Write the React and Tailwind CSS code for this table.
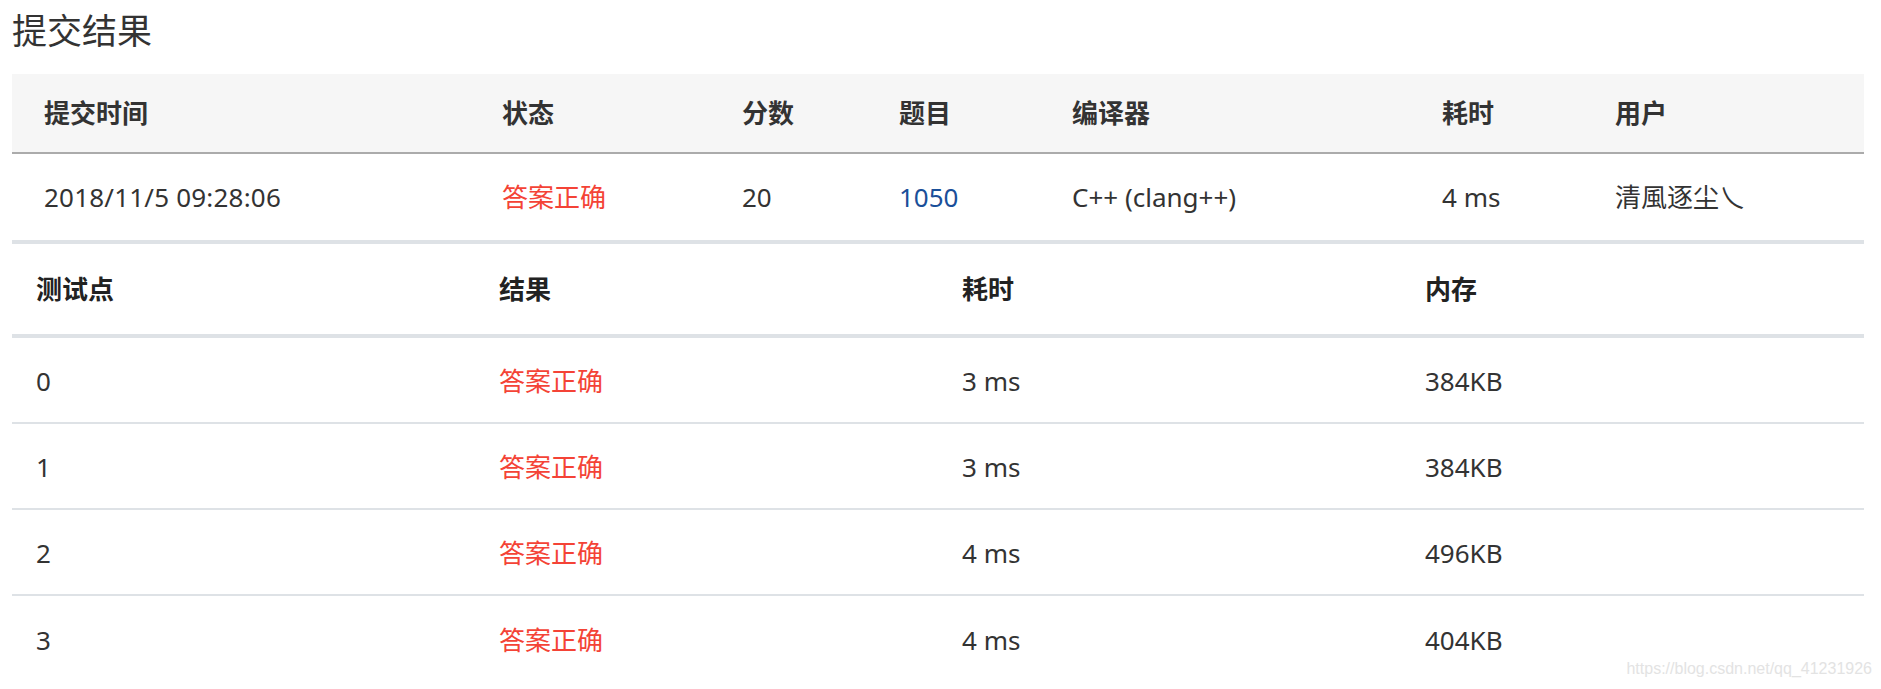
export default function App() {
  const font = { fontFamily: '"Noto Sans", "Noto Sans CJK SC", sans-serif' };
  const rows = [
    ["0", "3 ms", "384KB"],
    ["1", "3 ms", "384KB"],
    ["2", "4 ms", "496KB"],
    ["3", "4 ms", "404KB"],
  ];
  return (
    <div className="relative min-h-[689px] w-[1881px] bg-white text-[#333]" style={font}>
      <div className="ml-[12px] w-[1852px]">
        <div className="flex h-[60px] items-center text-[35px] leading-none font-normal text-[#333]">
          提交结果
        </div>

        {/* submission table */}
        <div className="mt-[14px]">
          <div className="grid h-[80px] grid-cols-[458px_240px_157px_173px_370px_173px_1fr] items-center border-b-2 border-[#ababab] bg-[#f6f6f6] text-[26px] font-bold text-[#333]">
            <div className="pl-[32px]">提交时间</div>
            <div className="pl-[32px]">状态</div>
            <div className="pl-[32px]">分数</div>
            <div className="pl-[32px]">题目</div>
            <div className="pl-[32px]">编译器</div>
            <div className="pl-[32px]">耗时</div>
            <div className="pl-[32px]">用户</div>
          </div>
          <div className="grid h-[86px] grid-cols-[458px_240px_157px_173px_370px_173px_1fr] items-center text-[26px] text-[#333]">
            <div className="pl-[32px] tracking-[0.2px]">2018/11/5 09:28:06</div>
            <div className="pl-[32px] text-[#f44336]">答案正确</div>
            <div className="pl-[32px]">20</div>
            <div className="pl-[32px] text-[#1a4f99]">1050</div>
            <div className="pl-[32px]">C++ (clang++)</div>
            <div className="pl-[32px]">4 ms</div>
            <div className="pl-[32px]">清風逐尘乀</div>
          </div>
        </div>

        {/* test case table */}
        <div className="border-t-4 border-[#dee2e6]">
          <div className="grid h-[94px] grid-cols-4 items-center border-b-4 border-[#dee2e6] text-[26px] font-bold text-[#222]">
            <div className="pl-[24px]">测试点</div>
            <div className="pl-[24px]">结果</div>
            <div className="pl-[24px]">耗时</div>
            <div className="pl-[24px]">内存</div>
          </div>
          {rows.map((r, i) => (
            <div
              key={i}
              className={
                i < rows.length - 1
                  ? "grid h-[86px] grid-cols-4 items-center border-b-2 border-[#dee2e6] pt-[3px] text-[26px] text-[#333]"
                  : "grid h-[86px] grid-cols-4 items-center pt-[3px] text-[26px] text-[#333]"
              }
            >
              <div className="pl-[24px]">{r[0]}</div>
              <div className="pl-[24px] text-[#f44336]">答案正确</div>
              <div className="pl-[24px]">{r[1]}</div>
              <div className="pl-[24px]">{r[2]}</div>
            </div>
          ))}
        </div>
      </div>

      <div
        className="absolute right-[9px] top-[661px] text-[16px] leading-[16px] text-[#e3e3e3]"
        style={{ fontFamily: '"Liberation Sans", Arial, sans-serif' }}
      >
        https://blog.csdn.net/qq_41231926
      </div>
    </div>
  );
}
